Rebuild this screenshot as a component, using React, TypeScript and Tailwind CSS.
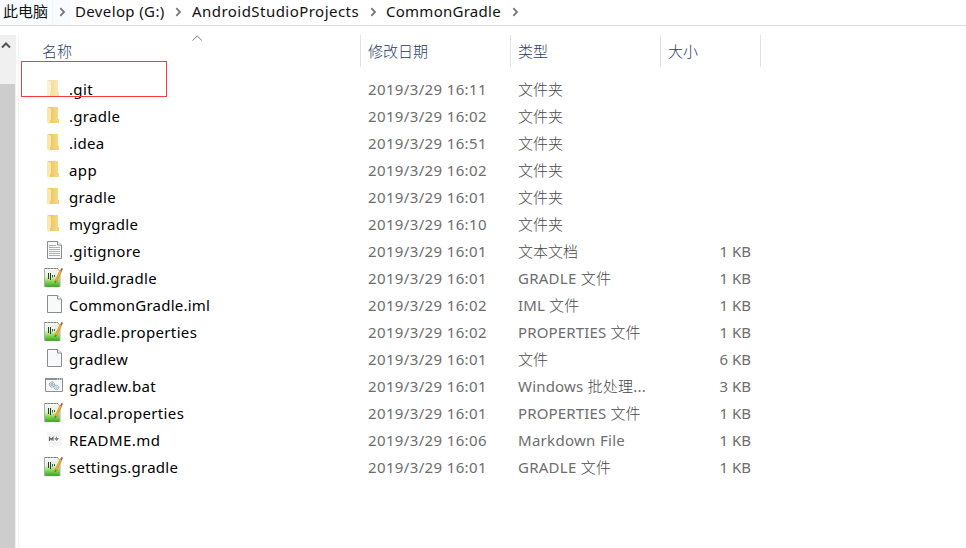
import React from "react";

type Kind = "folder" | "hidden" | "text" | "blank" | "gradle" | "batch" | "markdown";

interface Entry {
  name: string;
  date: string;
  type: string;
  size?: string;
  kind: Kind;
  nameClass: string;
  typeClass?: string;
}

const entries: Entry[] = [
  { name: ".git", date: "16:11", type: "文件夹", kind: "hidden", nameClass: "tracking-[0.35px]" },
  { name: ".gradle", date: "16:02", type: "文件夹", kind: "folder", nameClass: "tracking-[0.3px]" },
  { name: ".idea", date: "16:51", type: "文件夹", kind: "folder", nameClass: "tracking-[0.3px]" },
  { name: "app", date: "16:02", type: "文件夹", kind: "folder", nameClass: "tracking-[0.4px]" },
  { name: "gradle", date: "16:01", type: "文件夹", kind: "folder", nameClass: "tracking-[0.3px]" },
  { name: "mygradle", date: "16:10", type: "文件夹", kind: "folder", nameClass: "tracking-[0.3px]" },
  { name: ".gitignore", date: "16:01", type: "文本文档", size: "1 KB", kind: "text", nameClass: "tracking-[0.35px]" },
  { name: "build.gradle", date: "16:01", type: "GRADLE 文件", size: "1 KB", kind: "gradle", nameClass: "tracking-[0.28px]", typeClass: "tracking-[0.25px]" },
  { name: "CommonGradle.iml", date: "16:02", type: "IML 文件", size: "1 KB", kind: "blank", nameClass: "tracking-[0.23px]", typeClass: "tracking-[0.15px]" },
  { name: "gradle.properties", date: "16:02", type: "PROPERTIES 文件", size: "1 KB", kind: "gradle", nameClass: "tracking-[0.36px]", typeClass: "tracking-[0.15px]" },
  { name: "gradlew", date: "16:01", type: "文件", size: "6 KB", kind: "blank", nameClass: "tracking-[0.38px]" },
  { name: "gradlew.bat", date: "16:01", type: "Windows 批处理...", size: "3 KB", kind: "batch", nameClass: "tracking-[0.36px]", typeClass: "tracking-[0.2px]" },
  { name: "local.properties", date: "16:01", type: "PROPERTIES 文件", size: "1 KB", kind: "gradle", nameClass: "tracking-[0.36px]", typeClass: "tracking-[0.15px]" },
  { name: "README.md", date: "16:06", type: "Markdown File", size: "1 KB", kind: "markdown", nameClass: "tracking-[0.43px]", typeClass: "tracking-[0.3px]" },
  { name: "settings.gradle", date: "16:01", type: "GRADLE 文件", size: "1 KB", kind: "gradle", nameClass: "tracking-[0.27px]", typeClass: "tracking-[0.25px]" },
];

// Chinese runs are set in the light weight so that they sit evenly beside the Latin text.
function MixedText({ text }: { text: string }) {
  return (
    <>
      {text.split(/([\u4e00-\u9fff]+)/).map((part, i) =>
        i % 2 === 1 ? (
          <span key={i} className="font-light text-[#484848]">
            {part}
          </span>
        ) : (
          part
        ),
      )}
    </>
  );
}

function FolderShape() {
  return (
    <>
      <path d="M4 2h10v12h1v4H4z" fill="url(#folderBack)" />
      <path d="M13 14h2v4h-2z" fill="#f3d47c" />
      <path d="M3 2l4 1.800v10.700l-1 .5v4l-3-1.600z" fill="#ffe8a6" />
    </>
  );
}

function PageShape({ lined }: { lined?: boolean }) {
  return (
    <>
      <path d="M3.500 1.500h10l4 3.500v13.500h-14z" fill="#f8f9fa" stroke="#8b8b8b" />
      <path d="M13.500 1.500V5h4" fill="#fff" stroke="#8b8b8b" />
      {lined && <path d="M5 5.500h7M5 7.500h11M5 9.500h11M5 11.500h11M5 13.500h11M5 15.500h11" stroke="#b0b0b0" />}
    </>
  );
}

function FileIcon({ kind }: { kind: Kind }) {
  return (
    <svg viewBox="0 0 20 22" className="h-[22px] w-5 shrink-0" fill="none">
      {kind === "folder" && <FolderShape />}
      {kind === "hidden" && (
        <g opacity=".6">
          <FolderShape />
        </g>
      )}
      {kind === "text" && <PageShape lined />}
      {kind === "blank" && <PageShape />}
      {kind === "gradle" && (
        <>
          <path d="M.5 1.500h13l2.500 3v15.200H.5z" fill="url(#greenPage)" stroke="#a9b0a9" />
          <path d="M1.500 19.500h14" stroke="#5d9c48" />
          <path d="M1 1.500h13" stroke="#7d8380" strokeDasharray="2 1" />
          <path d="M4.500 6v6M6.500 6v7" stroke="#2c3a28" />
          <path d="M8.500 8v2.500M10.500 8v2" stroke="#4f5b49" />
          <path d="M17 3.500l-5.200 11" stroke="#c98a2b" strokeWidth="2.500" />
          <path d="M16.700 4L12 13.800" stroke="#f7b22d" strokeWidth="1.400" />
          <path d="M16.200 3.400l1.100-2.500 1.700.8-1.100 2.500z" fill="#a0605a" />
          <path d="M10.800 13.800l1.900.9-2 1.800z" fill="#7a6340" />
        </>
      )}
      {kind === "batch" && (
        <>
          <path d="M1.500 3.500h17v13h-17z" fill="#f6f8f9" stroke="#8c9094" />
          <path d="M1 3h18v2H1z" fill="#8c9094" />
          <path d="M13 4h1M15 4h1M17 4h1" stroke="#fff" />
          <circle cx="8" cy="9.500" r="2.600" fill="#e9edef" stroke="#7e8c94" strokeDasharray="1.200 .5" />
          <circle cx="8" cy="9.500" r="1" stroke="#7e8c94" strokeWidth=".8" />
          <circle cx="12.500" cy="12.500" r="2.200" fill="#e5f2fa" stroke="#83a9c3" strokeDasharray="1.200 .4" />
          <circle cx="12.500" cy="12.500" r=".8" stroke="#83a9c3" strokeWidth=".6" />
        </>
      )}
      {kind === "markdown" && (
        <>
          <path d="M3 3.500L16.500 2l1.500 14.500L5 18.500z" fill="#f4f4f4" />
          <path d="M5.500 12V8.700l1.700 1.800 1.800-2v3.200" stroke="#686868" strokeWidth="1.200" />
          <path d="M12.500 7.800v3.700M10.800 9.500h3.800M11.300 10l1.300 1.500L14 10" stroke="#858585" />
        </>
      )}
    </svg>
  );
}

function Chevron({ className }: { className: string }) {
  return (
    <svg viewBox="0 0 8 10" className={`h-2.5 w-2 shrink-0 ${className}`} fill="none">
      <path d="M1.300 1.200L5 5 1.300 8.800" stroke="#777" strokeWidth="1.800" />
    </svg>
  );
}

export default function App() {
  return (
    <div className="relative flex h-[548px] w-[966px] flex-col overflow-hidden bg-white font-['Noto_Sans','Noto_Sans_CJK_SC',sans-serif] text-[15px] leading-[27px] whitespace-nowrap">
      <svg className="absolute h-0 w-0">
        <defs>
          <linearGradient id="folderBack">
            <stop offset=".3" stopColor="#ebc96f" />
            <stop offset="1" stopColor="#fbdc83" />
          </linearGradient>
          <linearGradient id="greenPage" x2="0" y2="1">
            <stop stopColor="#f4f6f6" />
            <stop offset=".45" stopColor="#e2f2d8" />
            <stop offset=".7" stopColor="#8fd95a" />
            <stop offset="1" stopColor="#2fae16" />
          </linearGradient>
        </defs>
      </svg>

      <nav className="flex h-[26px] shrink-0 items-center border-b border-[#d9d9d9] text-[#111]">
        <div className="flex h-full w-[52px] items-center bg-[#f9fcfe] pl-[3px] pb-[2px]">此电脑</div>
        <div className="flex h-full w-[19px] items-center border-l border-[#eef6fb] bg-[#f9fcfe] pb-[2px]">
          <Chevron className="ml-[6px]" />
        </div>
        <div className="flex items-center pb-[2px] pl-1">
          <span className="w-[90px] tracking-[0.37px]">Develop (G:)</span>
          <Chevron className="ml-[10px]" />
          <span className="ml-[9px] w-[167px] tracking-[0.46px]">AndroidStudioProjects</span>
          <Chevron className="ml-[11px]" />
          <span className="ml-[8px] w-[115px] tracking-[0.26px]">CommonGradle</span>
          <Chevron className="ml-[11px]" />
        </div>
      </nav>

      <div className="flex min-h-0 flex-1 pt-[9px]">
        <div className="flex w-4 flex-col bg-[#f0f0f0]">
          <div className="flex h-[49px] shrink-0 justify-center pt-[6px] pr-[5px]">
            <svg viewBox="0 0 10 8" className="h-2 w-2.5" fill="none">
              <path d="M1 6.500L5 2.500l4 4" stroke="#555" strokeWidth="2" />
            </svg>
          </div>
          <div className="w-[15px] flex-1 bg-[#cdcdcd]" />
        </div>
        <div className="ml-[2px] w-px bg-[#f4f4f4]" />
        <main className="flex-1">
          <header className="flex h-8 font-light text-[#1f3c66]">
            <div className="flex w-[342px] border-r border-[#e2e2e2] pl-[23px]">
              <span className="w-[149px] pt-[3px]">名称</span>
              <svg viewBox="0 0 12 7" className="h-[7px] w-3" fill="none">
                <path d="M1.500 5.500L6.200 1l4.700 4.500" stroke="#777" />
              </svg>
            </div>
            <div className="w-[150px] border-r border-[#e2e2e2] pl-[7px] pt-[3px]">修改日期</div>
            <div className="w-[150px] border-r border-[#e2e2e2] pl-[7px] pt-[3px]">类型</div>
            <div className="w-[100px] border-r border-[#e2e2e2] pl-[7px] pt-[3px]">大小</div>
          </header>
          <div className="pt-[9px]">
            {entries.map((entry) => (
              <div key={entry.name} className="flex h-[27px] text-[#6d6d6d]">
                <div className="flex w-[349px] gap-[5px] pl-[25px] text-black">
                  <div className="pt-[2px]">
                    <FileIcon kind={entry.kind} />
                  </div>
                  <span className={entry.nameClass}>{entry.name}</span>
                </div>
                <span className="w-[150px] tracking-[0.36px]">2019/3/29 {entry.date}</span>
                <span className={`w-[150px] ${entry.typeClass ?? ""}`}>
                  <MixedText text={entry.type} />
                </span>
                <span className="w-[83px] text-right">{entry.size}</span>
              </div>
            ))}
          </div>
        </main>
      </div>

      <div className="absolute left-[21px] top-[61px] h-9 w-[146px] border border-[#f53b3b]" />
    </div>
  );
}
